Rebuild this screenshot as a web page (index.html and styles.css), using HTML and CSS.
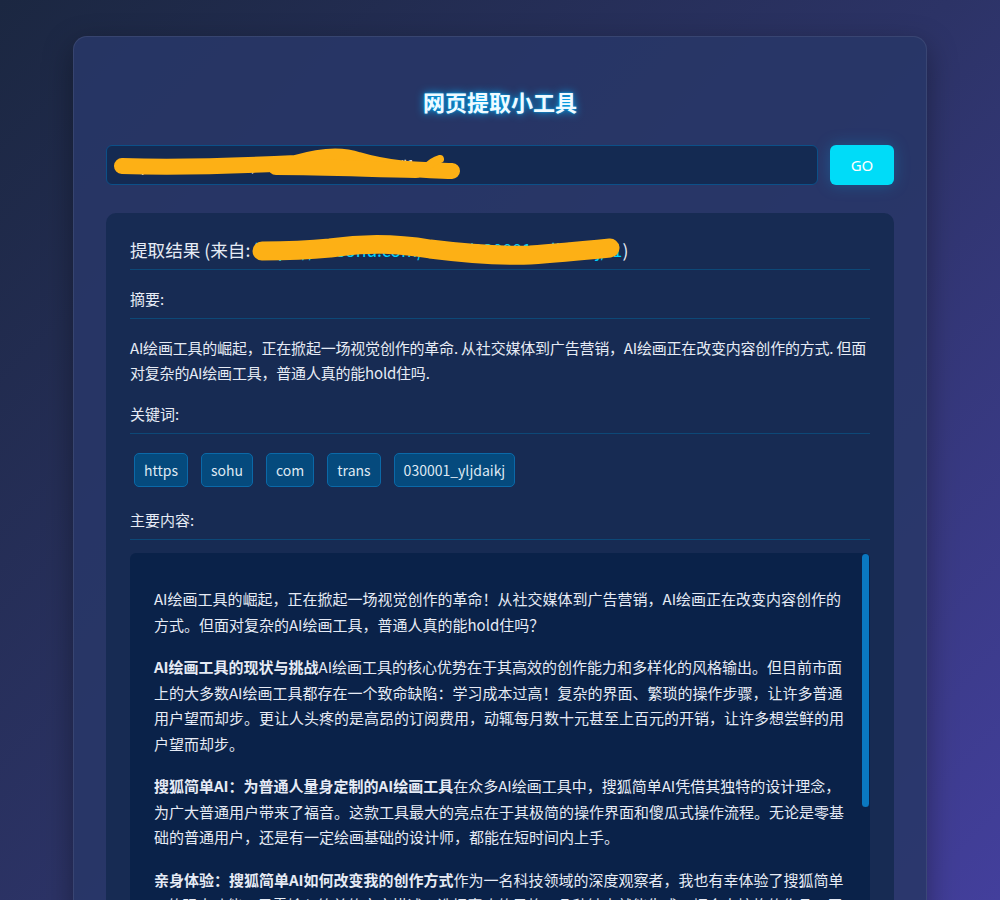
FILE: index.html
```html
<!DOCTYPE html>
<html lang="zh-CN">
<head>
  <meta charset="UTF-8" />
  <meta name="viewport" content="width=device-width, initial-scale=1.0" />
  <title>网页提取小工具</title>
  <link rel="stylesheet" href="styles.css">
</head>
<body>

  <div class="app">
    <h1 class="title">网页提取小工具</h1>

    <form class="search">
      <div class="url-field">
        <input type="text" class="url-input" value="https://m.sohu.com/trans/030001_yljdaikj/l1" />
        <!-- 涂抹遮挡 -->
        <svg class="scribble" viewBox="0 0 712 40">
          <path d="M16 21 C80 23 150 20 190 18 C210 12 232 8 252 15 C285 25 320 25 346 26" />
          <path d="M170 22 C220 22 260 24 310 25" />
          <path d="M318 25 Q326 16 334 14" class="thin" />
        </svg>
      </div>
      <button type="submit" class="go-btn">GO</button>
    </form>

    <section class="result">
      <h3 class="result-title">
        提取结果 (来自: <a href="#">https://m.sohu.com/trans/030001_yljdaikj/l1</a>)
        <svg class="scribble">
          <path d="M132 14 C170 14 190 12 200 11 C240 5 270 7 300 12 C340 17 370 19 400 18 C430 16 450 14 480 11" />
        </svg>
      </h3>

      <h4 class="label">摘要:</h4>
      <p class="summary">AI绘画工具的崛起，正在掀起一场视觉创作的革命. 从社交媒体到广告营销，AI绘画正在改变内容创作的方式. 但面对复杂的AI绘画工具，普通人真的能hold住吗.</p>

      <h4 class="label">关键词:</h4>
      <div class="tags">
        <span class="tag">https</span>
        <span class="tag">sohu</span>
        <span class="tag">com</span>
        <span class="tag">trans</span>
        <span class="tag">030001_yljdaikj</span>
      </div>

      <h4 class="label">主要内容:</h4>
      <div class="content-box">
        <div class="content">
          <p>AI绘画工具的崛起，正在掀起一场视觉创作的革命！从社交媒体到广告营销，AI绘画正在改变内容创作的方式。但面对复杂的AI绘画工具，普通人真的能hold住吗？</p>
          <p><strong>AI绘画工具的现状与挑战</strong>AI绘画工具的核心优势在于其高效的创作能力和多样化的风格输出。但目前市面上的大多数AI绘画工具都存在一个致命缺陷：学习成本过高！复杂的界面、繁琐的操作步骤，让许多普通用户望而却步。更让人头疼的是高昂的订阅费用，动辄每月数十元甚至上百元的开销，让许多想尝鲜的用户望而却步。</p>
          <p><strong>搜狐简单AI：为普通人量身定制的AI绘画工具</strong>在众多AI绘画工具中，搜狐简单AI凭借其独特的设计理念，为广大普通用户带来了福音。这款工具最大的亮点在于其极简的操作界面和傻瓜式操作流程。无论是零基础的普通用户，还是有一定绘画基础的设计师，都能在短时间内上手。</p>
          <p><strong>亲身体验：搜狐简单AI如何改变我的创作方式</strong>作为一名科技领域的深度观察者，我也有幸体验了搜狐简单AI的强大功能。只需输入简单的文字描述，选择喜欢的风格，几秒钟内就能生成一幅令人惊艳的作品。无论是制作社交媒体配图，还是为文章设计插画，它都能轻松胜任，大大提升了我的工作效率。</p>
          <p><strong>未来展望：AI绘画将走向大众化</strong>随着技术的不断进步，AI绘画工具将变得越来越智能、越来越易用。搜狐简单AI的出现，正是这一趋势的有力证明。相信在不久的将来，每个人都能成为自己的艺术家。</p>
          <p><strong>结语</strong>如果你也想体验AI绘画的魅力，不妨试试搜狐简单AI，让创意不再受限于技能，让每个人都能轻松创作出属于自己的精彩作品。</p>
        </div>
        <div class="scroll-thumb"></div>
      </div>
    </section>
  </div>

</body>
</html>
```

FILE: styles.css
```css
* {
  margin: 0;
  padding: 0;
  box-sizing: border-box;
}

body {
  font-family: "Noto Sans CJK SC", "Noto Sans", sans-serif;
  background: linear-gradient(135deg, #1b2741 0%, #2c3366 50%, #433f9c 100%) fixed;
  min-height: 100vh;
  color: #e6ebf5;
  padding-top: 36px;
}

.app {
  width: 854px;
  margin: 0 auto;
  background: rgba(40, 55, 104, 0.88);
  border: 1px solid rgba(255, 255, 255, 0.08);
  border-radius: 14px;
  padding: 32px 32px 40px;
  box-shadow: 0 10px 30px rgba(0, 0, 0, 0.35);
}

.title {
  font-size: 22px;
  font-weight: 700;
  line-height: 33px;
  text-align: center;
  color: #f0faff;
  text-shadow: 0 0 8px #00b4ff, 0 0 2px #00b4ff;
  margin: 16px 0 27px;
}

/* 输入栏 */
.search {
  display: flex;
  gap: 12px;
}

.url-field {
  flex: 1;
  position: relative;
}

.url-input {
  width: 100%;
  height: 40px;
  padding: 0 15px;
  background: #142a52;
  border: 1px solid #0c5088;
  border-radius: 6px;
  color: #e8eef8;
  font-family: inherit;
  font-size: 14px;
  outline: none;
}

.scribble {
  position: absolute;
  top: 0;
  left: 0;
  width: 100%;
  height: 100%;
  overflow: visible;
  pointer-events: none;
}

.scribble path {
  fill: none;
  stroke: #fdb015;
  stroke-width: 16;
  stroke-linecap: round;
  stroke-linejoin: round;
}

.scribble path.thin {
  stroke-width: 8;
}

.go-btn {
  width: 64px;
  height: 40px;
  background: #00dcf8;
  color: #fff;
  border: none;
  border-radius: 6px;
  font-family: "Noto Sans", sans-serif;
  font-size: 15px;
  cursor: pointer;
  box-shadow: 0 0 16px rgba(0, 190, 255, 0.25);
}

/* 结果卡片 */
.result {
  margin-top: 28px;
  background: #172b53;
  border-radius: 10px;
  padding: 24px 24px 30px;
}

.result-title {
  position: relative;
  font-size: 17.6px;
  font-weight: 400;
  line-height: 26px;
  padding-bottom: 6px;
  border-bottom: 1px solid #0d4877;
}

.result-title a {
  color: #00d4ff;
  text-decoration: none;
}

.result-title .scribble path {
  stroke-width: 19;
}

.label {
  font-size: 15px;
  font-weight: 400;
  line-height: 24px;
  margin-top: 17px;
  padding-bottom: 7px;
  border-bottom: 1px solid #0d4877;
}

.summary {
  font-size: 15px;
  line-height: 25px;
  margin-top: 16px;
  letter-spacing: -0.2px;
}

.tags {
  display: flex;
  flex-wrap: wrap;
  gap: 12px 13px;
  padding: 19px 4px 4px;
}

.tag {
  height: 34px;
  line-height: 32px;
  padding: 0 9px;
  background: #054a7d;
  border: 1px solid #0b69a8;
  border-radius: 5px;
  font-size: 14px;
  color: #dfe8f2;
}

/* 主要内容 */
.content-box {
  position: relative;
  margin-top: 13px;
  background: #0a2249;
  border-radius: 6px;
}

.content {
  padding: 16px 21px 20px 24px;
  max-height: 400px;
  overflow: hidden;
}

.scroll-thumb {
  position: absolute;
  top: 1px;
  right: 1px;
  width: 7px;
  height: 253px;
  background: #0a78c0;
  border-radius: 4px;
}

.content p {
  font-size: 15px;
  line-height: 25.5px;
  margin: 17px 0;
}

.content strong {
  font-weight: 700;
}
```
